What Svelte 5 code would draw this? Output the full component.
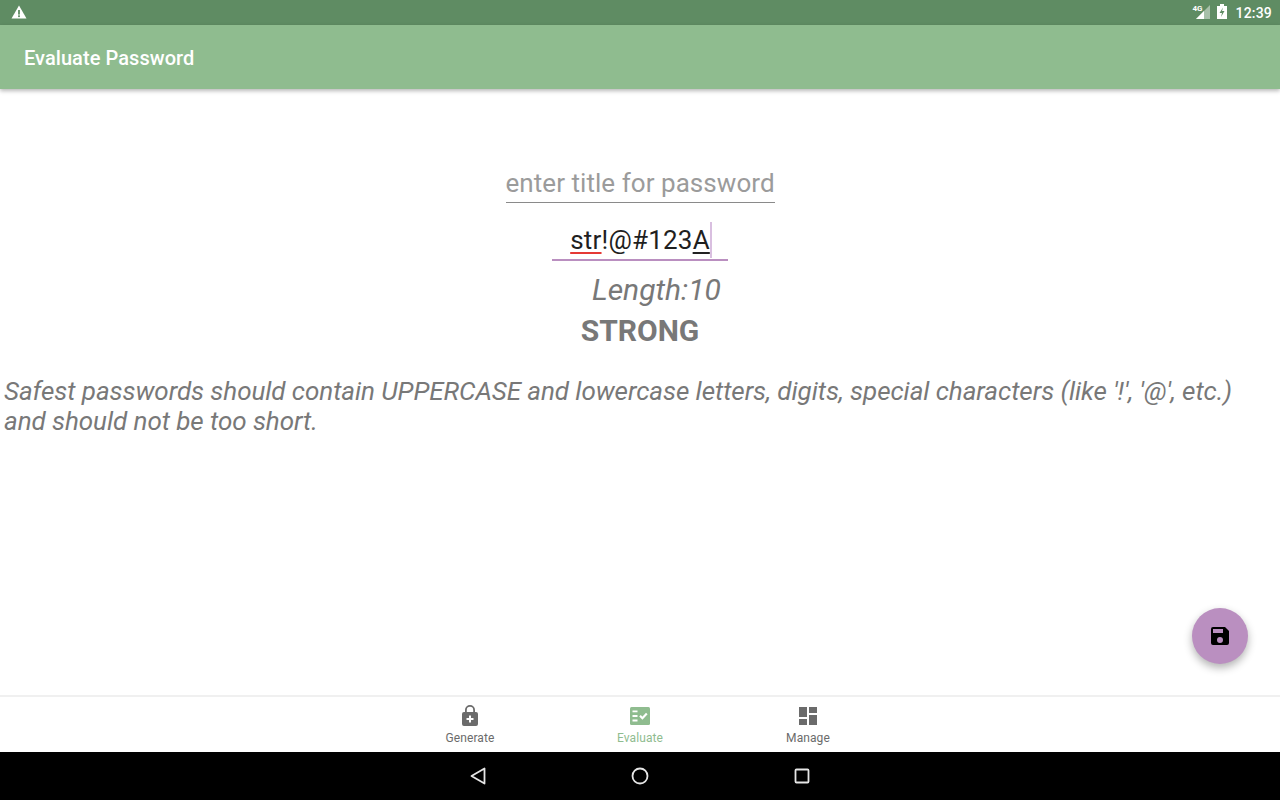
<script>
  const navItems = [
    { label: 'Generate', active: false, kind: 'lock' },
    { label: 'Evaluate', active: true, kind: 'check' },
    { label: 'Manage', active: false, kind: 'dash' }
  ];
</script>

<div class="screen">
  <div class="status">
    <svg class="warn" width="16" height="14" viewBox="0 0 16 14"><path d="M0.5 13.5 8 0.5l7.5 13z" fill="#fff"/><rect x="7.1" y="5" width="1.8" height="4.6" fill="#5f8c63"/><rect x="7.1" y="10.3" width="1.8" height="1.8" fill="#5f8c63"/></svg>
    <div class="status-right">
      <span class="signal">
        <svg width="18" height="16" viewBox="0 0 18 16"><path d="M17 1v14H3z" fill="#fff" opacity=".45"/><path d="M11 7v8H3z" fill="#fff"/></svg>
        <span class="lte">4G</span>
      </span>
      <svg class="batt" width="10" height="15" viewBox="0 0 10 15"><path d="M0 2h3V0h4v2h3v13H0z" fill="#fff"/><path d="M6 3.500 2.500 9H5l-1 4 3.500-6H5z" fill="#5f8c63"/></svg>
      <span class="time">12:39</span>
    </div>
  </div>

  <header class="appbar">Evaluate Password</header>

  <main class="content">
    <div class="form">
      <div class="title-field">enter title for password</div>
      <div class="pw-field">
        <span class="pw"><span class="spell">str</span>!@#123<span class="comp">A</span></span><span class="caret"></span>
      </div>
      <div class="length">Length:10</div>
      <div class="strength">STRONG</div>
    </div>
    <p class="hint">Safest passwords should contain UPPERCASE and lowercase letters, digits, special characters (like '!', '@', etc.) and should not be too short.</p>
    <button class="fab" aria-label="Save">
      <svg width="24" height="24" viewBox="0 0 24 24"><path d="M17 3H5a2 2 0 0 0-2 2v14a2 2 0 0 0 2 2h14a2 2 0 0 0 2-2V7zm-5 16a3 3 0 1 1 0-6 3 3 0 0 1 0 6zm3-10H5V5h10z" fill="#000"/></svg>
    </button>
  </main>

  <nav class="bottom">
    {#each navItems as item}
      <div class="tab" class:active={item.active}>
        {#if item.kind === 'lock'}
          <svg width="24" height="24" viewBox="0 0 24 24"><path fill-rule="evenodd" d="M12 1a5 5 0 0 0-5 5v2H6a2 2 0 0 0-2 2v10a2 2 0 0 0 2 2h12a2 2 0 0 0 2-2V10a2 2 0 0 0-2-2h-1V6a5 5 0 0 0-5-5zM8.800 8V6a3.200 3.200 0 0 1 6.400 0v2zM11 11.500h2V14h2.500v2H13v2.500h-2V16H8.500v-2H11z" fill="currentColor"/></svg>
        {:else if item.kind === 'check'}
          <svg width="24" height="24" viewBox="0 0 24 24">
            <rect x="2" y="3" width="20" height="18" rx="1.500" fill="currentColor"/>
            <path d="M4.500 7.300h5M4.500 12h5M4.500 16.500h5" stroke="#fff" stroke-width="1.800" fill="none"/>
            <path d="M12 11.800l2.400 2.400 4.400-4.600" stroke="#fff" stroke-width="2.200" fill="none"/>
          </svg>
        {:else}
          <svg width="24" height="24" viewBox="0 0 24 24"><path d="M3 3h8v10H3zM13 3h8v6h-8zM13 11h8v10h-8zM3 15h8v6H3z" fill="currentColor"/></svg>
        {/if}
        <span>{item.label}</span>
      </div>
    {/each}
  </nav>

  <div class="sysnav">
    <svg width="20" height="20" viewBox="0 0 20 20"><path d="M16.500 2.500v15L3.500 10z" fill="none" stroke="#e6e6e6" stroke-width="1.800" stroke-linejoin="round"/></svg>
    <svg width="20" height="20" viewBox="0 0 20 20"><circle cx="10" cy="10" r="7.500" fill="none" stroke="#e6e6e6" stroke-width="1.800"/></svg>
    <svg width="20" height="20" viewBox="0 0 20 20"><rect x="3.500" y="3.500" width="13" height="13" rx="1" fill="none" stroke="#e6e6e6" stroke-width="1.800"/></svg>
  </div>
</div>

<style>
  :global(body) { margin: 0; }
  .screen {
    width: 1280px;
    height: 800px;
    display: flex;
    flex-direction: column;
    font-family: Roboto, "Liberation Sans", sans-serif;
    background: #fff;
    overflow: hidden;
  }
  .status {
    height: 25px;
    flex: none;
    background: #5f8c63;
    display: flex;
    align-items: center;
    justify-content: space-between;
    padding: 0 8px 0 11px;
    color: #fff;
  }
  .warn { margin-top: -1px; }
  .status-right { display: flex; align-items: center; }
  .signal { position: relative; display: flex; margin-right: 6px; margin-top: -1px; }
  .lte { position: absolute; left: -1px; top: 1px; font-size: 8px; font-weight: 700; line-height: 8px; }
  .batt { margin-right: 8px; margin-top: -2px; }
  .time { font-size: 14px; font-weight: 500; letter-spacing: 0.2px; }
  .appbar {
    height: 64px;
    flex: none;
    box-sizing: border-box;
    background: #8fbc8f;
    color: #fff;
    font-size: 20px;
    font-weight: 500;
    letter-spacing: 0.06px;
    line-height: 66px;
    padding-left: 24px;
    box-shadow: 0 2px 4px rgba(0,0,0,.28);
    position: relative;
    z-index: 1;
  }
  .content { flex: 1; position: relative; }
  .form {
    display: flex;
    flex-direction: column;
    align-items: center;
    padding-top: 75px;
  }
  .title-field {
    width: 269px;
    height: 39px;
    box-sizing: border-box;
    border-bottom: 1px solid #8a8a8a;
    color: #9b9b9b;
    font-size: 26px;
    letter-spacing: 0.05px;
    line-height: 38px;
    text-align: center;
    white-space: nowrap;
  }
  .pw-field {
    width: 176px;
    height: 39px;
    margin-top: 19px;
    box-sizing: border-box;
    border-bottom: 2px solid #ba8fc0;
    color: #1f1f1f;
    font-size: 26px;
    letter-spacing: 0.2px;
    line-height: 36px;
    display: flex;
    justify-content: center;
    position: relative;
  }
  .spell { text-decoration: underline; text-decoration-color: #e53935; text-decoration-thickness: 2px; text-underline-offset: 3px; }
  .comp { text-decoration: underline; text-decoration-color: #222; text-decoration-thickness: 1.500px; text-underline-offset: 3px; }
  .caret {
    position: absolute;
    left: 158px;
    top: 0;
    width: 2px;
    height: 36px;
    background: #d9bfe0;
  }
  .length {
    margin-top: 8px;
    padding-bottom: 1px;
    padding-left: 33px;
    color: #787878;
    font-size: 30px;
    font-style: italic;
    line-height: 42px;
  }
  .strength {
    color: #787878;
    font-size: 30px;
    font-weight: 700;
    line-height: 38px;
  }
  .hint {
    margin: 26px 0 0;
    padding: 0 4px;
    color: #787878;
    font-size: 26px;
    letter-spacing: -0.06px;
    font-style: italic;
    line-height: 30px;
  }
  .fab {
    position: absolute;
    left: 1192px;
    top: 519px;
    width: 56px;
    height: 56px;
    padding: 0;
    border: 0;
    border-radius: 50%;
    background: #ba8fc0;
    box-shadow: 0 4px 8px rgba(0,0,0,.3);
    display: flex;
    align-items: center;
    justify-content: center;
  }
  .bottom {
    height: 57px;
    flex: none;
    box-sizing: border-box;
    border-top: 2px solid #f0f0f0;
    display: grid;
    grid-template-columns: 170px 170px 166px;
    padding-left: 385px;
  }
  .tab {
    display: flex;
    flex-direction: column;
    align-items: center;
    color: #6b6b6b;
    font-size: 12px;
    padding-top: 7px;
    line-height: 14px;
    letter-spacing: 0.1px;
  }
  .tab span { margin-top: 3px; }
  .tab.active { color: #8fbc8f; }
  .sysnav {
    height: 48px;
    flex: none;
    background: #000;
    display: flex;
    justify-content: center;
    align-items: center;
    gap: 142px;
  }
</style>
